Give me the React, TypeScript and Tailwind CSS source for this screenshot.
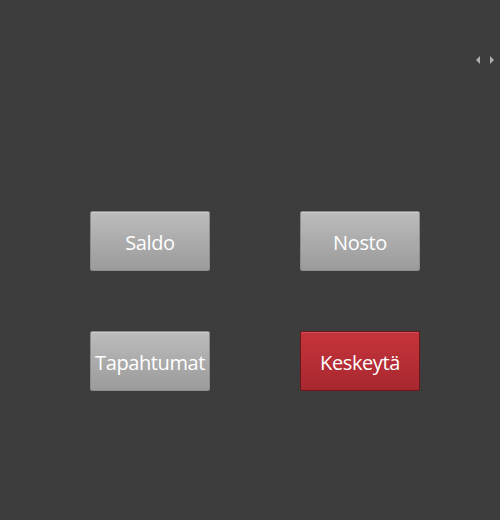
import React from "react";

function Btn({ label, red }: { label: string; red?: boolean }) {
  return (
    <button
      className={
        red
          ? "w-[120px] h-[60px] rounded-[2px] border border-[#6e161a] bg-gradient-to-b from-[#c6343c] to-[#a8282f] text-white text-[20px] leading-none flex items-center justify-center pt-[3px] shadow-[inset_0_1px_0_rgba(255,255,255,0.15)]"
          : "w-[120px] h-[60px] rounded-[2px] border border-[#8c8c8c] bg-gradient-to-b from-[#bcbcbc] to-[#9b9b9b] text-white text-[20px] leading-none flex items-center justify-center pt-[3px] shadow-[inset_0_1px_0_rgba(255,255,255,0.25)]"
      }
      style={{ fontFamily: '"Open Sans", "Noto Sans", sans-serif' }}
    >
      <span className="tracking-[-0.4px]">{label}</span>
    </button>
  );
}

export default function App() {
  return (
    <div className="relative w-[500px] h-[520px] bg-[#3d3d3d] overflow-hidden">
      <div className="absolute right-[6px] top-[56px] flex gap-[10px] items-center">
        <svg width="4" height="8" viewBox="0 0 4 8">
          <polygon points="4,0 0,4 4,8" fill="#b0b0b0" />
        </svg>
        <svg width="4" height="8" viewBox="0 0 4 8">
          <polygon points="0,0 4,4 0,8" fill="#b0b0b0" />
        </svg>
      </div>
      <div className="pt-[211px] pl-[90px] grid grid-cols-[120px_120px] gap-x-[90px] gap-y-[60px]">
        <Btn label="Saldo" />
        <Btn label="Nosto" />
        <Btn label="Tapahtumat" />
        <Btn label="Keskeytä" red />
      </div>
    </div>
  );
}
